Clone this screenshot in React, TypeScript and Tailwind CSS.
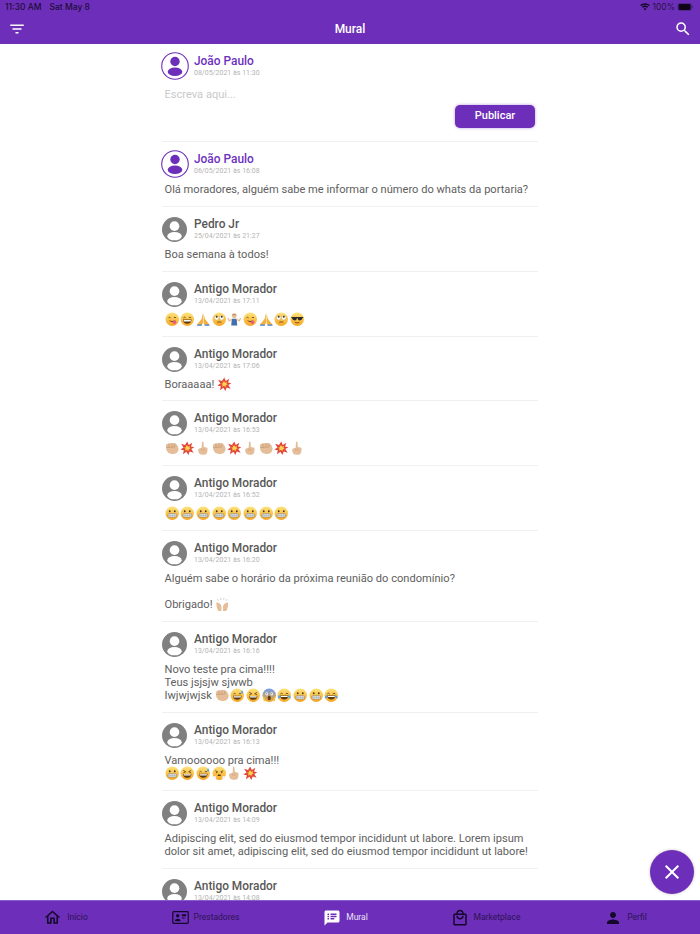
import type { ReactNode } from "react";
import { MdClose, MdFilterList, MdOutlineHome, MdOutlineLocalMall, MdPerson, MdSearch, MdSpeakerNotes } from "react-icons/md";

type EmojiName =
  | "yum"
  | "grin"
  | "pray"
  | "eyes"
  | "shrug"
  | "cool"
  | "fist"
  | "boom"
  | "point"
  | "teeth"
  | "hands"
  | "sweat"
  | "squint"
  | "scream"
  | "joy"
  | "steam";

function Face({ children, top = "#fde27a", bottom = "#f6a623" }: { children: ReactNode; top?: string; bottom?: string }) {
  const id = `face-${top.slice(1)}`;
  return (
    <>
      <defs>
        <linearGradient id={id} x1="0" y1="0" x2="0" y2="1">
          <stop offset="0" stopColor={top} />
          <stop offset="1" stopColor={bottom} />
        </linearGradient>
      </defs>
      <circle cx="8" cy="8" r="7.400" fill={`url(#${id})`} />
      {children}
    </>
  );
}

const shapes: Record<EmojiName, ReactNode> = {
  yum: (
    <Face>
      <path d="M3.800 6.400q1.200-1.200 2.400 0M9.800 6.400q1.200-1.200 2.400 0" stroke="#5b3a12" strokeWidth=".9" fill="none" />
      <path d="M4 9.200q4 3.400 8 0q-4 1.200-8 0z" fill="#5b3a12" />
      <ellipse cx="10.400" cy="11.400" rx="2" ry="2" fill="#ec5a7c" />
    </Face>
  ),
  grin: (
    <Face>
      <path d="M3.800 6.400q1.200-1.400 2.400 0M9.800 6.400q1.200-1.400 2.400 0" stroke="#5b3a12" strokeWidth=".9" fill="none" />
      <path d="M3.200 8.400h9.600q-.4 4.600-4.800 4.600t-4.800-4.600z" fill="#5b3a12" />
      <path d="M3.900 8.900h8.200q-.1 1.200-.5 1.700h-7.200q-.4-.5-.5-1.700z" fill="#fff" />
    </Face>
  ),
  pray: (
    <>
      <path d="M7.700 1 6.300 7.500.8 14.400h5.500L7.700 12zM8.300 1l1.400 6.500 5.500 6.900H9.700L8.300 12z" fill="#f5b13c" />
      <path d="M.8 15.200h5.500l.5-1.400H1.800zM15.200 15.200H9.700l-.5-1.400h5z" fill="#3f7fdb" />
    </>
  ),
  eyes: (
    <Face>
      <circle cx="5.200" cy="6.400" r="2.500" fill="#fff" stroke="#a8762a" strokeWidth=".3" />
      <circle cx="10.800" cy="6.400" r="2.500" fill="#fff" stroke="#a8762a" strokeWidth=".3" />
      <circle cx="5.200" cy="5.200" r="1.100" fill="#4a3214" />
      <circle cx="10.800" cy="5.200" r="1.100" fill="#4a3214" />
      <path d="M5.800 11.300q2.200-.9 4.400 0" stroke="#5b3a12" strokeWidth=".9" fill="none" />
    </Face>
  ),
  shrug: (
    <>
      <circle cx="8" cy="4.200" r="2.700" fill="#e8bd94" />
      <path d="M5.300 3.700q2.700-3.200 5.400 0q-2.700-1-5.400 0z" fill="#a8895e" />
      <path d="M5.300 7.400h5.400l.6 7.600H4.700z" fill="#3f6fae" />
      <path d="M5.500 8 2.400 9.800 1 6.600M10.500 8l3.100 1.800L15 6.600" stroke="#e8bd94" strokeWidth="1.500" fill="none" />
    </>
  ),
  cool: (
    <Face>
      <path d="M1.500 5.500h13v1.200l-.7 0q-.3 2.700-3 2.700-2.100 0-2.400-2.500h-.8q-.3 2.500-2.400 2.500-2.700 0-3-2.700l-.7 0z" fill="#2b2b2b" />
      <path d="M5.600 11.400q2.400 1.300 4.800 0" stroke="#5b3a12" strokeWidth=".9" fill="none" />
    </Face>
  ),
  fist: (
    <>
      <path d="M1 5.500q0-2.500 2.400-2.800l6-.6q3.200 0 4.400 2.800l1.200 3.400q.2 3.600-2.400 5.200-2.700 1.300-6 .6-4-1-5-4z" fill="#e5be99" />
      <path d="M4.400 2.800v4.200M7.600 2.500v4.300M10.800 2.600v4M1.300 7.300l9.800-.7" stroke="#bc8f6c" strokeWidth=".6" fill="none" />
    </>
  ),
  boom: (
    <>
      <path d="m8 .5 1.700 3.900L13.600 2l-1.400 4.100L15.800 7l-3.300 1.900 2.500 4-4.300-1.400-1.500 4L7.100 11.900 3.300 14.500l.9-4.300L.3 9.400l3.600-2.200L1.200 3l4.300 1.400z" fill="#e2483a" />
      <path d="m8 4.400 1.100 2 2.200-.9-.9 2.200 1.500 1.100-2.200.3-.4 2.200-1.500-1.600-2.200 1 .6-2.200-1.700-1.100 2.200-.6-.4-2.200 1.700 1.100z" fill="#fbd24e" />
    </>
  ),
  point: (
    <>
      <path d="M6.600.8q1.500-.5 1.700 1.100l.4 4.800 3 .6q1.100.3 1.100 1.600l-.4 3.600q-.6 2.800-3.300 2.800H6.800Q4 15.300 3 13L2.300 10q.1-1.500 1.700-2l2.300-.6z" fill="#e5be99" />
      <path d="M6.500 8.400v2.400M8.800 8.400v2.400" stroke="#bc8f6c" strokeWidth=".5" />
    </>
  ),
  teeth: (
    <Face>
      <circle cx="5.200" cy="5.800" r="1" fill="#4a3214" />
      <circle cx="10.800" cy="5.800" r="1" fill="#4a3214" />
      <rect x="3" y="8.300" width="10" height="4.200" rx="2" fill="#dfe3e6" stroke="#6d5a3a" strokeWidth=".4" />
      <path d="M3.100 10.400h9.800M5.500 8.400v4M8 8.400v4M10.500 8.400v4" stroke="#8c8c8c" strokeWidth=".35" />
    </Face>
  ),
  hands: (
    <>
      <path d="M1.500 7.500q0-1.500 1-1.700l3.700 2.200.9 2.200v5.300H3.600l-1.600-4zM14.500 7.500q0-1.500-1-1.700L9.800 8l-.9 2.200v5.300h3.500l1.600-4z" fill="#e5be99" />
      <path d="M3.700 4 2.800 2.500M6.400 3 6 1.300M9.600 3l.4-1.700M12.300 4l.9-1.500" stroke="#777" strokeWidth=".5" />
    </>
  ),
  sweat: (
    <Face>
      <path d="M3.800 6.600q1.200-1.400 2.400 0M9.800 6.600q1.200-1.400 2.400 0" stroke="#5b3a12" strokeWidth=".9" fill="none" />
      <path d="M3.200 8.600h9.600q-.4 4.400-4.800 4.400t-4.800-4.400z" fill="#5b3a12" />
      <path d="M3.800 9h8.400l-.4 1.400H4.200z" fill="#fff" />
      <path d="M13.200 2.200q1.600 2 1.300 3.200-.5 1-1.500.8-1-.4-.9-1.300z" fill="#5aa7e8" />
    </Face>
  ),
  squint: (
    <Face>
      <path d="m3.600 4.800 2.800 1.500-2.800 1.400M12.400 4.800 9.600 6.300l2.800 1.400" stroke="#5b3a12" strokeWidth=".9" fill="none" />
      <path d="M3.400 8.800h9.200q-.4 4.300-4.600 4.300t-4.600-4.300z" fill="#5b3a12" />
      <path d="M4 9.200h8l-.4 1.200H4.400z" fill="#fff" />
    </Face>
  ),
  scream: (
    <Face top="#6f9df0" bottom="#f6a623">
      <ellipse cx="5.200" cy="6.400" rx="1.500" ry="1.800" fill="#fff" />
      <ellipse cx="10.800" cy="6.400" rx="1.500" ry="1.800" fill="#fff" />
      <circle cx="5.200" cy="6.400" r=".6" fill="#333" />
      <circle cx="10.800" cy="6.400" r=".6" fill="#333" />
      <ellipse cx="8" cy="11" rx="1.700" ry="2.400" fill="#5b3a12" />
      <path d="M1.200 9.500q1.200 0 2 2l.5 3.200H1.800zM14.800 9.500q-1.200 0-2 2l-.5 3.200h1.900z" fill="#f8c23b" />
    </Face>
  ),
  joy: (
    <Face>
      <path d="M3.600 6.600q1.400-1.800 2.800 0M9.600 6.600q1.400-1.800 2.800 0" stroke="#5b3a12" strokeWidth=".9" fill="none" />
      <path d="M3.400 8.400h9.200q-.4 4.400-4.600 4.400t-4.600-4.400z" fill="#5b3a12" />
      <path d="M4 8.800h8l-.4 1.200H4.400z" fill="#fff" />
      <path d="M3.500 7.500 1 9.500q-.6 1.500.6 2 1.600 0 2-1.600zM12.500 7.500l2.500 2q.6 1.500-.6 2-1.600 0-2-1.600z" fill="#5aa7e8" />
    </Face>
  ),
  steam: (
    <Face>
      <path d="M3.600 5.200 6.400 6.400M12.400 5.200 9.600 6.400" stroke="#5b3a12" strokeWidth=".9" fill="none" />
      <circle cx="5.200" cy="7.200" r=".7" fill="#4a3214" />
      <circle cx="10.800" cy="7.200" r=".7" fill="#4a3214" />
      <rect x="6.200" y="9.400" width="3.600" height="1.600" rx=".8" fill="#5b3a12" />
      <path d="M1.500 11.500q1.500-1.200 3 0 1 1.800-.4 2.800-2.400.4-2.600-2.800zM14.500 11.500q-1.500-1.200-3 0-1 1.800.4 2.800 2.400.4 2.600-2.800z" fill="#f3f4f6" />
    </Face>
  ),
};

function Emoji({ name }: { name: EmojiName }) {
  return (
    <svg viewBox="0 0 16 16" className="inline-block size-[14.500px] -mt-[6px] -mb-[3px] mr-[1.200px] align-baseline">
      {shapes[name]}
    </svg>
  );
}

function Emojis({ names }: { names: EmojiName[] }) {
  return (
    <>
      {names.map((name, i) => (
        <Emoji key={i} name={name} />
      ))}
    </>
  );
}

function ContactIcon() {
  return (
    <svg viewBox="0 0 18 14" className="w-[17px] h-[13px]">
      <rect x=".7" y=".7" width="16.600" height="12.600" rx=".8" fill="none" stroke="currentColor" strokeWidth="1.300" />
      <circle cx="6" cy="5.200" r="1.900" fill="currentColor" />
      <path d="M2.800 11q.3-2.600 3.200-2.600T9.200 11z" fill="currentColor" />
      <path d="M10.500 3.600h4.500v2h-4.500zM10.500 7h3v1h-3z" fill="currentColor" />
    </svg>
  );
}

function Avatar({ own }: { own?: boolean }) {
  if (own) {
    return (
      <svg viewBox="0 0 28 28" className="size-7 shrink-0 -ml-px">
        <circle cx="14" cy="14" r="13.300" fill="#fff" stroke="#6d2fb9" strokeWidth="1.100" />
        <circle cx="14" cy="9.500" r="4.700" fill="#6d2fb9" />
        <ellipse cx="14" cy="19.700" rx="7.300" ry="4.300" fill="#6d2fb9" />
      </svg>
    );
  }
  return (
    <svg viewBox="0 0 26 26" className="size-[25px] shrink-0 mr-[2px]">
      <circle cx="13" cy="13" r="13" fill="#808080" />
      <circle cx="13" cy="9.500" r="5" fill="#fff" />
      <ellipse cx="13" cy="20" rx="7.500" ry="4.300" fill="#fff" />
    </svg>
  );
}

function PostHeader({ name, date, own }: { name: string; date: string; own?: boolean }) {
  return (
    <div className="flex items-center gap-[5px] h-[28px]">
      <Avatar own={own} />
      <div className="flex flex-col">
        <span
          className={`font-['Roboto',sans-serif] font-medium text-[11.900px] leading-[14px] ${own ? "text-[#6d2fc0]" : "text-[#585858]"}`}
        >
          {name}
        </span>
        <span className="font-['Roboto',sans-serif] text-[7px] leading-[10px] text-[#b4b4b4]">{date}</span>
      </div>
    </div>
  );
}

function Post({ name, date, own, children }: { name: string; date: string; own?: boolean; children?: ReactNode }) {
  return (
    <article className="border-b border-[#f0f0f0] pt-[8px] pb-[10px] shrink-0">
      <PostHeader name={name} date={date} own={own} />
      {children && (
        <div className="mt-[5px] pl-[2.500px] font-['Roboto',sans-serif] text-[11.100px] leading-[13px] text-[#606060]">
          {children}
        </div>
      )}
    </article>
  );
}

const tabs = [
  { label: "Início", icon: <MdOutlineHome size={19} /> },
  { label: "Prestadores", icon: <ContactIcon /> },
  { label: "Mural", icon: <MdSpeakerNotes size={18} />, active: true },
  { label: "Marketplace", icon: <MdOutlineLocalMall size={18} /> },
  { label: "Perfil", icon: <MdPerson size={18} /> },
];

export default function App() {
  return (
    <div className="relative flex flex-col w-[700px] h-[934px] overflow-hidden bg-white">
      <header className="flex flex-col shrink-0 h-[44px] bg-[#6d2fb9]">
        <div className="flex items-center justify-between h-[14px] pl-[5px] pr-[6px] font-['Inter',sans-serif] text-[8.500px] text-[#1f0c3a]">
          <span className="font-medium">
            11:30 AM<span className="ml-[8px]">Sat May 8</span>
          </span>
          <span className="flex items-center gap-[2px]">
            <svg viewBox="0 0 12 9" className="w-[10px] h-[8px]">
              <path d="M6 8.600 4.300 6.600Q6 5.300 7.700 6.600zM3.300 5.500 2.200 4.300Q6 1.300 9.800 4.300L8.700 5.500Q6 3.500 3.300 5.500zM1.300 3.400.2 2.200Q6-2.200 11.800 2.200L10.700 3.400Q6-.1 1.300 3.400z" fill="#120620" />
            </svg>
            <span className="text-[#2a1148]">100%</span>
            <svg viewBox="0 0 18 9" className="w-[17px] h-[8px]">
              <rect x=".4" y=".4" width="15.200" height="8.200" rx="2" fill="none" stroke="#3f1f70" strokeWidth=".7" />
              <rect x="1.200" y="1.200" width="13.600" height="6.600" rx="1.300" fill="#0e0618" />
              <rect x="16.200" y="3" width="1" height="3" rx=".5" fill="#3f1f70" />
            </svg>
          </span>
        </div>
        <div className="flex items-center justify-between flex-1 pl-[8px] pr-[8px] text-white">
          <MdFilterList size={18} />
          <span className="font-['Roboto',sans-serif] font-medium text-[12px]">Mural</span>
          <MdSearch size={18} />
        </div>
      </header>

      <main className="flex-1 min-h-0 overflow-hidden">
        <div className="flex flex-col w-[376px] ml-[162px]">
          <section className="border-b border-[#f0f0f0] h-[98px] pt-[8px] shrink-0">
            <PostHeader name="João Paulo" date="08/05/2021 às 11:30" own />
            <div className="mt-[8px] pl-[2.500px] font-['Roboto',sans-serif] text-[11.100px] leading-[14px] text-[#c9c9c9]">
              Escreva aqui...
            </div>
            <div className="flex justify-end pr-[3px] mt-[3px]">
              <button className="w-[80px] h-[23px] rounded-[5px] bg-[#6d2fb9] shadow-[0_0_3px_rgba(109,47,185,0.5)] text-white font-['Roboto',sans-serif] font-medium text-[11px]">
                Publicar
              </button>
            </div>
          </section>

          <Post name="João Paulo" date="06/05/2021 às 16:08" own>
            Olá moradores, alguém sabe me informar o número do whats da portaria?
          </Post>
          <Post name="Pedro Jr" date="25/04/2021 às 21:27">
            Boa semana à todos!
          </Post>
          <Post name="Antigo Morador" date="13/04/2021 às 17:11">
            <Emojis names={["yum", "grin", "pray", "eyes", "shrug", "yum", "pray", "eyes", "cool"]} />
          </Post>
          <Post name="Antigo Morador" date="13/04/2021 às 17:06">
            <span className="block h-[12px]">
              Boraaaaa! <Emoji name="boom" />
            </span>
          </Post>
          <Post name="Antigo Morador" date="13/04/2021 às 16:53">
            <Emojis names={["fist", "boom", "point", "fist", "boom", "point", "fist", "boom", "point"]} />
          </Post>
          <Post name="Antigo Morador" date="13/04/2021 às 16:52">
            <Emojis names={["teeth", "teeth", "teeth", "teeth", "teeth", "teeth", "teeth", "teeth"]} />
          </Post>
          <Post name="Antigo Morador" date="13/04/2021 às 16:20">
            Alguém sabe o horário da próxima reunião do condomínio?
            <br />
            <br />
            Obrigado! <Emoji name="hands" />
          </Post>
          <Post name="Antigo Morador" date="13/04/2021 às 16:16">
            Novo teste pra cima!!!!
            <br />
            Teus jsjsjw sjwwb
            <br />
            Iwjwjwjsk <Emojis names={["fist", "sweat", "squint", "scream", "joy", "teeth", "teeth", "joy"]} />
          </Post>
          <Post name="Antigo Morador" date="13/04/2021 às 16:13">
            Vamoooooo pra cima!!!
            <br />
            <Emojis names={["teeth", "squint", "sweat", "steam", "point", "boom"]} />
          </Post>
          <Post name="Antigo Morador" date="13/04/2021 às 14:09">
            Adipiscing elit, sed do eiusmod tempor incididunt ut labore. Lorem ipsum
            <br />
            dolor sit amet, adipiscing elit, sed do eiusmod tempor incididunt ut labore!
          </Post>
          <Post name="Antigo Morador" date="13/04/2021 às 14:08" />
        </div>
      </main>

      <nav className="grid grid-cols-5 shrink-0 h-[34px] bg-[#6d2fb9] border-t border-[#8a5ccb]">
        {tabs.map(({ label, icon, active }) => (
          <div
            key={label}
            className={`flex items-center justify-center gap-[5px] pr-[9px] ${active ? "text-white" : "text-[#14082b]"}`}
          >
            {icon}
            <span className={`font-['Roboto',sans-serif] text-[8.500px] ${active ? "text-[#ece2f8]" : "text-[#2d1255]"}`}>
              {label}
            </span>
          </div>
        ))}
      </nav>

      <button className="absolute left-[650px] top-[850px] flex items-center justify-center size-[44px] rounded-full bg-[#6d2fb9] text-white shadow-[0_0_3px_rgba(0,0,0,0.25)]">
        <MdClose size={24} />
      </button>
    </div>
  );
}
